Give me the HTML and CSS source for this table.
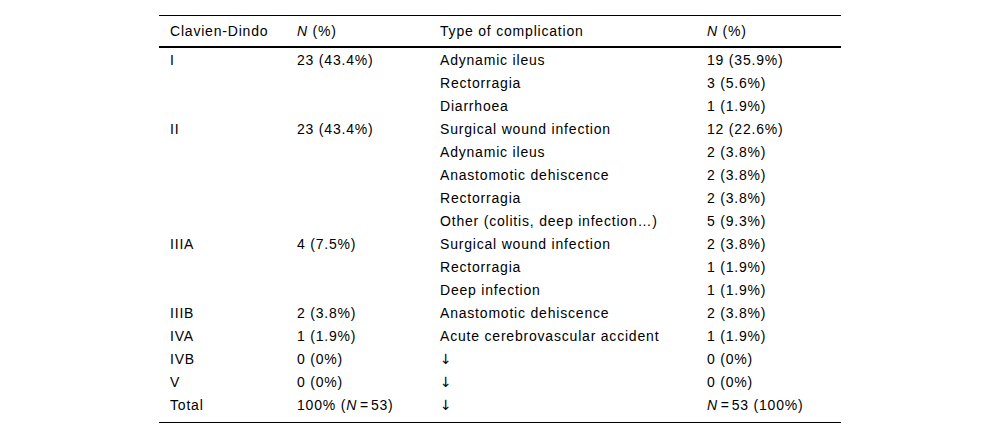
FILE: index.html
```html
<!DOCTYPE html>
<html>
<head>
<meta charset="utf-8">
<link rel="stylesheet" href="styles.css">
</head>
<body>
<div class="page">
<table class="ctable">
<colgroup>
<col class="c1"><col class="c2"><col class="c3"><col class="c4">
</colgroup>
<thead>
<tr><th>Clavien-Dindo</th><th><i>N</i> (%)</th><th>Type of complication</th><th><i>N</i> (%)</th></tr>
</thead>
<tbody>
<tr><td>I</td><td>23 (43.4%)</td><td>Adynamic ileus</td><td>19 (35.9%)</td></tr>
<tr><td></td><td></td><td>Rectorragia</td><td>3 (5.6%)</td></tr>
<tr><td></td><td></td><td>Diarrhoea</td><td>1 (1.9%)</td></tr>
<tr><td>II</td><td>23 (43.4%)</td><td>Surgical wound infection</td><td>12 (22.6%)</td></tr>
<tr><td></td><td></td><td>Adynamic ileus</td><td>2 (3.8%)</td></tr>
<tr><td></td><td></td><td>Anastomotic dehiscence</td><td>2 (3.8%)</td></tr>
<tr><td></td><td></td><td>Rectorragia</td><td>2 (3.8%)</td></tr>
<tr><td></td><td></td><td>Other (colitis, deep infection…)</td><td>5 (9.3%)</td></tr>
<tr><td>IIIA</td><td>4 (7.5%)</td><td>Surgical wound infection</td><td>2 (3.8%)</td></tr>
<tr><td></td><td></td><td>Rectorragia</td><td>1 (1.9%)</td></tr>
<tr><td></td><td></td><td>Deep infection</td><td>1 (1.9%)</td></tr>
<tr><td>IIIB</td><td>2 (3.8%)</td><td>Anastomotic dehiscence</td><td>2 (3.8%)</td></tr>
<tr><td>IVA</td><td>1 (1.9%)</td><td>Acute cerebrovascular accident</td><td>1 (1.9%)</td></tr>
<tr><td>IVB</td><td>0 (0%)</td><td><span class="arrow">↓</span></td><td>0 (0%)</td></tr>
<tr><td>V</td><td>0 (0%)</td><td><span class="arrow">↓</span></td><td>0 (0%)</td></tr>
<tr class="last"><td>Total</td><td>100% (<i>N</i><span class="eq">&#8201;=&#8201;</span>53)</td><td><span class="arrow">↓</span></td><td><i>N</i><span class="eq">&#8201;=&#8201;</span>53 (100%)</td></tr>
</tbody>
</table>
</div>
</body>
</html>
```
FILE: styles.css
```css
html, body {
  margin: 0;
  padding: 0;
  background: #fff;
}
.page {
  padding-top: 15px;
}
.ctable {
  margin: 0 auto;
  width: 682px;
  table-layout: fixed;
  border-collapse: collapse;
  font-family: "Liberation Sans", Arial, sans-serif;
  font-size: 14px;
  letter-spacing: 0.8px;
  color: #000;
  border-top: 1px solid #000;
  border-bottom: 1px solid #000;
}
.c1 { width: 127px; }
.c2 { width: 143px; }
.c3 { width: 267px; }
.c4 { width: 145px; }
.ctable th {
  font-weight: normal;
  text-align: left;
  height: 30px;
  padding: 0 11px;
  line-height: 30px;
  vertical-align: middle;
  border-bottom: 2px solid #000;
  box-sizing: border-box;
}
.ctable td {
  height: 23px;
  padding: 2px 11px 0;
  line-height: 21px;
  vertical-align: top;
  white-space: nowrap;
  box-sizing: border-box;
}
.ctable tr.last td {
  height: 29px;
  padding-bottom: 6px;
}
.eq {
  letter-spacing: 0;
}
.arrow {
  font-family: "DejaVu Sans", sans-serif;
  font-size: 14px;
  letter-spacing: 0;
}
```
